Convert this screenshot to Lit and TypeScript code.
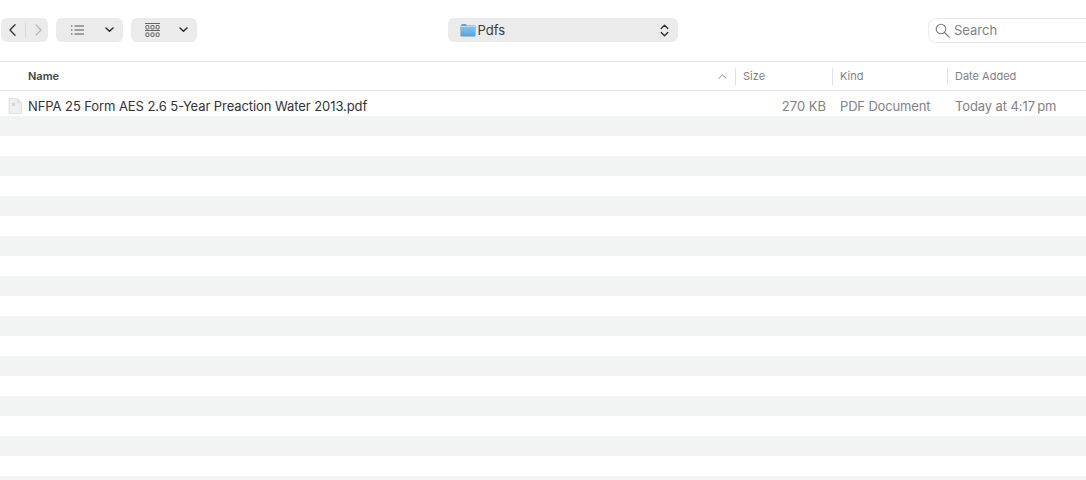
import { LitElement, html, css, svg } from "lit";
import { customElement } from "lit/decorators.js";

const chevronDown = svg`<path d="M1 1l3.500 3.200L8 1" fill="none" stroke="#2b2b2b" stroke-width="1.500" stroke-linecap="round" stroke-linejoin="round"/>`;

@customElement("app-root")
export class AppRoot extends LitElement {
  static styles = css`
    :host { display: block; width: 1086px; height: 480px; overflow: hidden; background: #fff; font-family: Inter, "Noto Sans", sans-serif; color: #333; }
    .toolbar { height: 62px; box-sizing: border-box; border-bottom: 1px solid #e3e3e3; padding: 18px 0 0 1px; display: grid; grid-template-columns: 47px 67px 66px 1fr 230px 1fr 158px; column-gap: 8px; align-items: start; }
    .btn { height: 24px; border-radius: 6px; background: #ebebeb; display: flex; align-items: center; box-sizing: border-box; }
    .nav { padding: 0 0 0 8px; }
    .nav .sep { width: 1px; height: 14px; background: #d8d8d8; margin: 0 9px; }
    .view { justify-content: space-between; padding: 0 9px 0 15px; }
    .view.grid { padding: 0 9px 0 14px; }
    .path { grid-column: 5; padding: 0 9px 0 12px; font-size: 13px; color: #3a3a3a; }
    .path span { margin-left: 2px; flex: 1; }
    .search { grid-column: 7; height: 25px; box-sizing: border-box; border: 1px solid #ececec; border-right: none; border-radius: 8px 0 0 8px; display: flex; align-items: center; padding: 0 0 1px 6px; gap: 4px; font-size: 13px; color: #828282; }
    .head { height: 29px; box-sizing: border-box; border-bottom: 1px solid #e3e3e3; display: grid; grid-template-columns: 735px 97px 115px 1fr; font-size: 11px; color: #828282; align-items: center; }
    .h-cell { display: flex; align-items: center; height: 17px; padding-left: 7px; border-left: 1px solid #e3e3e3; }
    .h-name { display: flex; align-items: center; justify-content: space-between; padding: 0 8px 0 28px; font-weight: 600; color: #444; }
    .row { height: 25px; padding-top: 5px; box-sizing: border-box; display: grid; grid-template-columns: 735px 97px 115px 1fr; font-size: 13px; color: #828282; align-items: center; line-height: 20px; }
    .r-name { display: flex; align-items: center; gap: 6px; padding-left: 8px; color: #333; letter-spacing: -0.08px; }
    .r-size { text-align: right; padding-right: 6px; margin-left: -7px; }
    .r-kind { padding-left: 8px; letter-spacing: -0.16px; }
    .r-date { padding-left: 8px; letter-spacing: -0.1px; }
    .stripes { display: flex; flex-direction: column; }
    .stripe { height: 20px; flex: none; }
    .stripe.odd { background: #f2f3f3; }
  `;

  render() {
    return html`
      <div class="toolbar">
        <div class="btn nav">
          <svg width="7" height="12" viewBox="0 0 7 12"><path d="M6 .8L1 6l5 5.200" fill="none" stroke="#333" stroke-width="1.300" stroke-linecap="round" stroke-linejoin="round"/></svg>
          <div class="sep"></div>
          <svg width="7" height="12" viewBox="0 0 7 12"><path d="M1 .8L6 6l-5 5.200" fill="none" stroke="#b4b4b4" stroke-width="1.200" stroke-linecap="round" stroke-linejoin="round"/></svg>
        </div>
        <div class="btn view">
          <svg width="13" height="10" viewBox="0 0 13 10" fill="none" stroke="#444"><path d="M3.500 1h9.500M3.500 5h9.500M3.500 9h9.500" stroke-width=".9"/><path d="M0 1h1.400M0 5h1.400M0 9h1.400" stroke-width="1.100"/></svg>
          <svg width="9" height="6" viewBox="0 0 9 6">${chevronDown}</svg>
        </div>
        <div class="btn view grid">
          <svg width="15" height="15" viewBox="0 0 15 15" fill="none" stroke="#444" stroke-width=".8"><path d="M0 .5h15M0 7.500h15"/><rect x=".9" y="2.500" width="3" height="3.500" rx=".5"/><rect x="6" y="2.500" width="3" height="3.500" rx=".5"/><rect x="11.100" y="2.500" width="3" height="3.500" rx=".5"/><rect x=".9" y="9.900" width="3" height="3.500" rx=".5"/><rect x="6" y="9.900" width="3" height="3.500" rx=".5"/><rect x="11.100" y="9.900" width="3" height="3.500" rx=".5"/></svg>
          <svg width="9" height="6" viewBox="0 0 9 6">${chevronDown}</svg>
        </div>
        <div class="btn path">
          <svg width="16" height="14" viewBox="0 0 16 14">
            <defs><linearGradient id="f" x1="0" y1="0" x2="0" y2="1"><stop offset="0" stop-color="#84c6f3"/><stop offset="1" stop-color="#55a2dd"/></linearGradient></defs>
            <path d="M1 2.500A1.500 1.500 0 0 1 2.500 1h3.300l1.400 1.500h7.300A1 1 0 0 1 15.500 3.500v2H.5z" fill="#5a9fd6"/>
            <rect x=".5" y="3" width="15" height="10.500" rx="1" fill="url(#f)" stroke="#a8b8c4" stroke-width=".5"/>
            <rect x="1" y="3.200" width="14" height=".8" fill="#c2e4fa"/>
          </svg>
          <span>Pdfs</span>
          <svg width="9" height="13" viewBox="0 0 9 13" fill="none" stroke="#2b2b2b" stroke-width="1.300" stroke-linecap="round" stroke-linejoin="round"><path d="M1.200 4.500L4.500 1.200l3.300 3.300M1.200 8.500l3.300 3.300 3.300-3.300"/></svg>
        </div>
        <div class="search">
          <svg width="15" height="15" viewBox="0 0 15 15" fill="none" stroke="#7d7d7d" stroke-width="1.100"><circle cx="6" cy="6" r="4.800"/><path d="M9.500 9.500l4.500 4.500" stroke-linecap="round"/></svg>
          <span>Search</span>
        </div>
      </div>
      <div class="head">
        <div class="h-name"><span>Name</span>
          <svg width="9" height="5" viewBox="0 0 9 5"><path d="M.7 4.500L4.500 .8l3.800 3.700" fill="none" stroke="#8a8a8a" stroke-width="1"/></svg>
        </div>
        <div class="h-cell">Size</div>
        <div class="h-cell">Kind</div>
        <div class="h-cell">Date Added</div>
      </div>
      <div class="row">
        <div class="r-name">
          <svg width="14" height="16" viewBox="0 0 14 16"><path d="M1 .5h8.500L13.500 4.500v11H1z" fill="#efefef" stroke="#e0e0e0"/><path d="M9.500 .5v4h4" fill="#e4e4e4" stroke="#e0e0e0"/><rect x="4" y="5" width="3" height="3" fill="#d4d4d4"/></svg>
          <span>NFPA 25 Form AES 2.6 5-Year Preaction Water 2013.pdf</span>
        </div>
        <div class="r-size">270 KB</div>
        <div class="r-kind">PDF Document</div>
        <div class="r-date">Today at 4:17\u202Fpm</div>
      </div>
      <div class="stripes">
        ${Array.from({ length: 19 }, (_, i) => html`<div class="stripe ${i % 2 === 0 ? "odd" : ""}"></div>`)}
      </div>
    `;
  }
}
